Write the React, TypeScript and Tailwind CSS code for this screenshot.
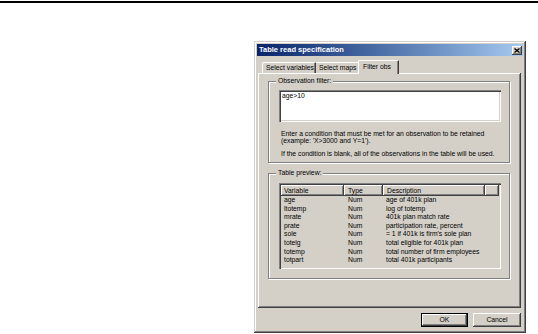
import React from 'react'

const rows = [
  ['age', 'Num', 'age of 401k plan'],
  ['ltotemp', 'Num', 'log of totemp'],
  ['mrate', 'Num', '401k plan match rate'],
  ['prate', 'Num', 'participation rate, percent'],
  ['sole', 'Num', "= 1 if 401k is firm's sole plan"],
  ['totelg', 'Num', 'total eligible for 401k plan'],
  ['totemp', 'Num', 'total number of firm employees'],
  ['totpart', 'Num', 'total 401k participants'],
]

const raised =
  'shadow-[inset_-1px_-1px_0_#404040,inset_1px_1px_0_#fff,inset_-2px_-2px_0_#808080]'
const sunken =
  'shadow-[inset_1px_1px_0_#808080,inset_2px_2px_0_#404040,inset_-1px_-1px_0_#fff,inset_-2px_-2px_0_#d4d0c8]'

function Group({ label, className, children }: { label: string; className?: string; children: React.ReactNode }) {
  return (
    <div
      className={`relative border border-[#808080] shadow-[inset_1px_1px_0_#fff,1px_1px_0_#fff] ${className ?? ''}`}
    >
      <span className="absolute left-[7px] top-[-5px] bg-[#d4d0c8] px-[2px] leading-[8px]">{label}</span>
      {children}
    </div>
  )
}

export default function App() {
  return (
    <div className="w-[538px] h-[334px] bg-white overflow-hidden flex flex-col font-['Liberation_Sans',Arial,sans-serif] text-[6.8px] text-black">
      <div className="mt-px h-[2px] bg-black" />

      {/* dialog */}
      <div className={`ml-[254px] mt-[38px] w-[272px] h-[292px] bg-[#d4d0c8] p-[3px] flex flex-col shadow-[inset_-1px_-1px_0_#404040,inset_1px_1px_0_#d4d0c8,inset_-2px_-2px_0_#808080,inset_2px_2px_0_#fff]`}>
        {/* title bar */}
        <div className="h-[12px] flex items-center justify-between bg-gradient-to-r from-[#0a246a] to-[#a6caf0] pl-[2px] pr-px">
          <span className="text-white font-bold text-[7.5px] leading-[12px]">Table read specification</span>
          <div className={`w-[10px] h-[9px] bg-[#d4d0c8] flex items-center justify-center ${raised}`}>
            <svg width="6" height="5" viewBox="0 0 6 5">
              <path d="M0.5 0.5 L5.5 4.5 M5.5 0.5 L0.5 4.5" stroke="#000" strokeWidth="1.3" />
            </svg>
          </div>
        </div>

        {/* tabs */}
        <div className="mt-[4px] h-[14px] flex items-end pl-[5px] relative z-10">
          <div className="h-[11px] mb-px w-[54px] border-l border-t border-white border-r border-r-[#404040] rounded-tl-[2px] shadow-[inset_-1px_0_0_#808080] pl-[3px] leading-[10px]">
            Select variables
          </div>
          <div className="h-[11px] mb-px w-[44px] border-t border-white border-r border-r-[#404040] shadow-[inset_-1px_0_0_#808080] pl-[3px] leading-[10px]">
            Select maps
          </div>
          <div className="h-[14px] w-[41px] -ml-[2px] bg-[#d4d0c8] border-l border-t border-white border-r border-r-[#404040] rounded-tl-[2px] shadow-[inset_-1px_0_0_#808080] pl-[4px] leading-[11px]">
            Filter obs
          </div>
        </div>

        {/* tab panel */}
        <div className={`-mt-px ml-px w-[263px] h-[235px] pt-[8px] pl-[10px] pr-[11px] ${raised}`}>
          <Group label="Observation filter:" className="h-[82px] pt-[8px] pl-[10px] pr-[8px]">
            <div className={`h-[32px] bg-white pl-[3px] pt-[2px] leading-[8px] ${sunken}`}>age&gt;10</div>
            <div className="mt-[7.5px] pl-[2px] leading-[7px]">
              <p>Enter a condition that must be met for an observation to be retained</p>
              <p>(example: 'X&gt;3000 and Y=1').</p>
              <p className="mt-[6px]">If the condition is blank, all of the observations in the table will be used.</p>
            </div>
          </Group>

          <Group label="Table preview:" className="mt-[10px] h-[106px] pt-[9px] pl-[10px] pr-[8px]">
            <div className={`h-[86px] p-[2px] ${sunken}`}>
              <div className="flex h-[11px] leading-[11px]">
                <div className={`w-[63px] pl-[3px] ${raised}`}>Variable</div>
                <div className={`w-[39px] pl-[4px] ${raised}`}>Type</div>
                <div className={`w-[102px] pl-[4px] ${raised}`}>Description</div>
                <div className={`flex-1 ${raised}`} />
              </div>
              {rows.map(([v, t, d]) => (
                <div key={v} className="flex h-[8.6px] leading-[8.6px] whitespace-nowrap">
                  <div className="w-[63px] pl-[3px]">{v}</div>
                  <div className="w-[39px] pl-[4px]">{t}</div>
                  <div className="w-[102px] pl-[3px]">{d}</div>
                </div>
              ))}
            </div>
          </Group>
        </div>

        {/* buttons */}
        <div className="mt-[5px] flex justify-end gap-[5px] pr-[2px]">
          <button className={`w-[47px] h-[14px] border border-black bg-[#d4d0c8] leading-[12px] ${raised}`}>OK</button>
          <button className={`w-[48px] h-[14px] bg-[#d4d0c8] leading-[14px] ${raised}`}>Cancel</button>
        </div>
      </div>
    </div>
  )
}
